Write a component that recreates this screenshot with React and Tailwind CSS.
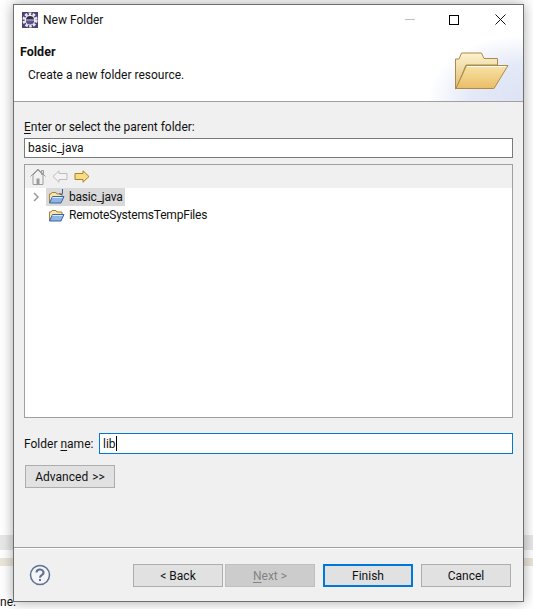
const font = { fontFamily: 'Roboto, "Liberation Sans", sans-serif' };

function Underlined({ children }) {
  return <span className="underline underline-offset-2">{children}</span>;
}

function AppIcon() {
  return (
    <svg width="16" height="16" viewBox="0 0 16 16">
      <rect width="16" height="16" fill="#4f3f78" />
      <circle cx="8" cy="8" r="6.300" fill="none" stroke="#e8e8e8" strokeWidth="2.600" strokeDasharray="2.600 1.350" />
      <circle cx="8" cy="8" r="5.300" fill="#ededed" />
      <circle cx="8" cy="8" r="4" fill="#34304c" />
      <path d="M4 8.500h8a4 4 0 0 1-8 0z" fill="#5d5290" />
      <rect x="4" y="7.500" width="8" height="1" fill="#d8d8e6" />
    </svg>
  );
}

function WizardFolder() {
  return (
    <svg width="54" height="38" viewBox="0 0 54 38">
      <defs>
        <linearGradient id="back" x1="0" y1="0" x2="0" y2="1">
          <stop offset="0" stopColor="#fdf3cd" />
          <stop offset="1" stopColor="#dfbd74" />
        </linearGradient>
        <linearGradient id="front" x1="0" y1="0" x2="0" y2="1">
          <stop offset="0" stopColor="#f8e3a8" />
          <stop offset="1" stopColor="#e9bd66" />
        </linearGradient>
      </defs>
      <path d="M.500 37V7H4L6.500 1h20L29 6.500h13.500V13H11L1 37z" fill="url(#back)" stroke="#ab8b4c" />
      <path d="M11.500 13.500h41.500L39 36.500H1z" fill="url(#front)" stroke="#ab8b4c" />
      <path d="M12 14.500h39" stroke="#fff" />
    </svg>
  );
}

function SmallFolder({ project }) {
  return (
    <svg width="17" height="16" viewBox="0 0 17 16" className="shrink-0">
      <path d="M1.500 14V5h1.500l1-1.500h4L9 5h5v2" fill="#f8e6b0" stroke="#a5813c" />
      <path d="M4.500 7.500h11.500l-3 6.500H1.500z" fill="#8fb4e6" stroke="#3c659f" />
      <path d="M4.500 8.500h10" stroke="#dce9f9" />
      {project && <path d="M14.500 0v4a1.500 1.500 0 0 1-3 0" fill="none" stroke="#3c5a94" />}
    </svg>
  );
}

function HomeIcon() {
  return (
    <svg width="16" height="17" viewBox="0 0 16 17">
      <path d="M11.500 2.500h2v4h-2z" fill="#dedede" stroke="#9c9c9c" />
      <path d="M.500 8.500L8 1l7.500 7.500M3 7v9.500h10V7L8 2z" fill="#f2f2f2" stroke="#9c9c9c" />
      <rect x="6.500" y="10.500" width="3" height="6" fill="#9c9c9c" />
    </svg>
  );
}

function Arrow({ right, fill, stroke }) {
  return (
    <svg width="16" height="13" viewBox="0 0 16 13" className={right ? "" : "-scale-x-100"}>
      <path d="M1 3.500h8V.800l6 5.700-6 5.700V9.500H1z" fill={fill} stroke={stroke} />
    </svg>
  );
}

function HelpIcon() {
  return (
    <svg width="22" height="22" viewBox="0 0 22 22">
      <circle cx="11" cy="11" r="9.500" fill="#f4f5f8" stroke="#5f6f92" strokeWidth="1.500" />
      <path d="M7.500 8.500a3.500 3 0 1 1 5.200 2.600c-1.200.8-1.700 1.300-1.700 2.700" fill="none" stroke="#5f6f92" strokeWidth="2" />
      <rect x="10" y="15" width="2" height="2" fill="#5f6f92" />
    </svg>
  );
}

function DialogButton({ children, disabled, primary, className = "" }) {
  let tone = "bg-[#e1e1e1] border-[#adadad] text-[#111]";
  if (disabled) tone = "bg-[#cccccc] border-[#bfbfbf] text-[#838383]";
  if (primary) tone = "bg-[#e1e1e1] border-[#0078d7] text-[#111] border-2";
  return (
    <div className={`w-[90px] h-[23px] flex items-center justify-center border pt-px ${tone} ${className}`}>
      {children}
    </div>
  );
}

export default function App() {
  return (
    <div className="relative w-[533px] h-[609px] overflow-hidden bg-white text-[12px] text-[#111]" style={font}>
      <div className="absolute left-0 right-0 top-[535px] h-[15px] bg-[#e8e8e8]" />
      <div className="absolute left-0 right-0 top-[558px] h-[8px] bg-[#ebe6da]" />
      <div className="absolute left-0 top-[596px] leading-[13px]">ne.</div>

      <div className="absolute left-[13px] top-[4px] w-[511px] h-[598px] flex flex-col border border-[#6f6f6f] bg-[#f0f0f0] shadow-[0_0_12px_rgba(0,0,0,0.35)]">
        <div className="relative h-[96px] shrink-0 bg-white overflow-hidden">
          <div className="absolute right-0 bottom-0 w-[100px] h-[68px] bg-[radial-gradient(ellipse_95px_66px_at_100%_100%,#dde3f5_0%,#e4e9f7_55%,#ffffff_100%)]" />
          <div className="relative h-[29px] flex items-center pl-[8px]">
            <AppIcon />
            <span className="ml-[5px]">New Folder</span>
            <div className="ml-auto flex items-center">
              <div className="w-[10px] h-px bg-[#c0c0c0] mr-[34px]" />
              <div className="w-[10px] h-[10px] border border-black mr-[36px]" />
              <svg width="11" height="11" viewBox="0 0 11 11" className="mr-[17px]">
                <path d="M.500.500l10 10M10.500.500l-10 10" stroke="#111" fill="none" />
              </svg>
            </div>
          </div>
          <div className="relative pl-[6px] font-bold text-[12.500px] leading-[18px] mt-[9px]">Folder</div>
          <div className="relative pl-[14px] leading-[18px] mt-[5px]">Create a new folder resource.</div>
          <div className="absolute left-[441px] top-[47px]">
            <WizardFolder />
          </div>
        </div>
        <div className="h-px shrink-0 bg-[#a0a0a0]" />

        <div className="flex-1 flex flex-col px-[10px]">
          <div className="mt-[17px] leading-[17px]"><Underlined>E</Underlined>nter or select the parent folder:</div>
          <div className="mt-[2px] h-[20px] flex items-center bg-white border border-[#7a7a7a] pl-[3px]">basic_java</div>

          <div className="mt-[6px] h-[254px] flex flex-col bg-white border border-[#a0a0a0]">
            <div className="h-[23px] shrink-0 flex items-center gap-[6px] pl-[5px] bg-[#f0f0f0]">
              <HomeIcon />
              <Arrow fill="#f3f3f3" stroke="#bdbdbd" />
              <Arrow right fill="#f8dc82" stroke="#a7842b" />
            </div>
            <div className="flex items-center h-[18px] pl-[8px]">
              <svg width="7" height="10" viewBox="0 0 7 10" className="shrink-0">
                <path d="M1 1l4 4-4 4" fill="none" stroke="#9a9a9a" strokeWidth="1.500" />
              </svg>
              <div className="ml-[6px] flex items-center h-[18px] pl-[2px] pr-[2px] bg-[#d9d9d9]">
                <SmallFolder project />
                <span className="ml-[4px] tracking-[-0.2px]">basic_java</span>
              </div>
            </div>
            <div className="flex items-center h-[18px] pl-[23px]">
              <SmallFolder />
              <span className="ml-[4px] tracking-[-0.2px]">RemoteSystemsTempFiles</span>
            </div>
          </div>

          <div className="mt-[15px] flex items-center">
            <span className="w-[75px] shrink-0">Folder <Underlined>n</Underlined>ame:</span>
            <div className="flex-1 h-[21px] flex items-center bg-white border border-[#0078d7] pl-[3px]">
              lib<span className="w-px h-[15px] bg-black" />
            </div>
          </div>

          <DialogButton className="mt-[11px] ml-px"><span>Advanced</span><span className="ml-[4px]">&gt;&gt;</span></DialogButton>
        </div>

        <div className="h-px shrink-0 bg-[#a0a0a0]" />
        <div className="h-px shrink-0 bg-white" />
        <div className="h-[52px] shrink-0 flex items-start pt-[15px] pl-[15px]">
          <HelpIcon />
          <DialogButton className="ml-[82px]">&lt; Back</DialogButton>
          <DialogButton disabled className="ml-[2px]"><span><Underlined>N</Underlined>ext &gt;</span></DialogButton>
          <DialogButton primary className="ml-[8px]">Finish</DialogButton>
          <DialogButton className="ml-[8px]">Cancel</DialogButton>
        </div>
      </div>
    </div>
  );
}
